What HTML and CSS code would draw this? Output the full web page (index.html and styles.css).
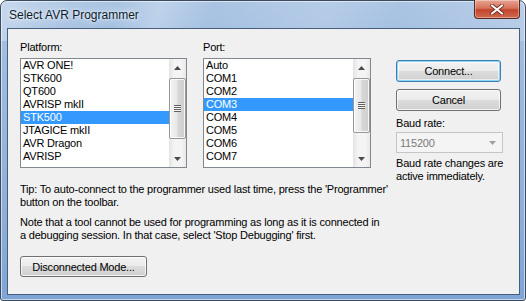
FILE: index.html
```html
<!DOCTYPE html>
<html lang="en">
<head>
  <meta charset="UTF-8">
  <title>Select AVR Programmer</title>
  <link rel="stylesheet" href="styles.css">
</head>
<body>

<!-- Dialog window -->
<div class="window">
  <div class="titlebar">
    <span class="title">Select AVR Programmer</span>
    <div class="close">
      <svg width="14" height="11" viewBox="0 0 14 11">
        <path d="M2 1.5 L12 9.5 M12 1.5 L2 9.5" stroke="#6a2418" stroke-width="3.6" stroke-linecap="round"/>
        <path d="M2 1.5 L12 9.5 M12 1.5 L2 9.5" stroke="#fff" stroke-width="2.2" stroke-linecap="round"/>
      </svg>
    </div>
  </div>

  <div class="client">
    <div class="top">
      <!-- Platform list -->
      <div class="col col-platform">
        <div class="label">Platform:</div>
        <div class="listbox">
          <ul class="items">
            <li>AVR ONE!</li>
            <li>STK600</li>
            <li>QT600</li>
            <li>AVRISP mkII</li>
            <li class="selected">STK500</li>
            <li>JTAGICE mkII</li>
            <li>AVR Dragon</li>
            <li>AVRISP</li>
          </ul>
          <div class="vscroll">
            <div class="arrow"><svg width="7" height="4" viewBox="0 0 7 4"><path d="M0 4 L3.5 0 L7 4 Z" fill="#4a4a4a"/></svg></div>
            <div class="track">
              <div class="thumb" style="height: 61px;"><span class="grip"></span></div>
            </div>
            <div class="arrow"><svg width="7" height="4" viewBox="0 0 7 4"><path d="M0 0 L3.5 4 L7 0 Z" fill="#4a4a4a"/></svg></div>
          </div>
        </div>
      </div>

      <!-- Port list -->
      <div class="col col-port">
        <div class="label">Port:</div>
        <div class="listbox">
          <ul class="items">
            <li>Auto</li>
            <li>COM1</li>
            <li>COM2</li>
            <li class="selected">COM3</li>
            <li>COM4</li>
            <li>COM5</li>
            <li>COM6</li>
            <li>COM7</li>
          </ul>
          <div class="vscroll">
            <div class="arrow"><svg width="7" height="4" viewBox="0 0 7 4"><path d="M0 4 L3.5 0 L7 4 Z" fill="#4a4a4a"/></svg></div>
            <div class="track">
              <div class="thumb" style="height: 55px;"><span class="grip"></span></div>
            </div>
            <div class="arrow"><svg width="7" height="4" viewBox="0 0 7 4"><path d="M0 0 L3.5 4 L7 0 Z" fill="#4a4a4a"/></svg></div>
          </div>
        </div>
      </div>

      <!-- Buttons and baud rate -->
      <div class="col col-side">
        <button class="btn btn-default">Connect...</button>
        <button class="btn btn-cancel">Cancel</button>
        <div class="label label-baud">Baud rate:</div>
        <div class="combo">
          <span>115200</span>
          <svg width="7" height="4" viewBox="0 0 7 4"><path d="M0 0 L3.5 4 L7 0 Z" fill="#a0a0a0"/></svg>
        </div>
        <p class="baud-note">Baud rate changes are<br>active immediately.</p>
      </div>
    </div>

    <p class="tip">Tip: To auto-connect to the programmer used last time, press the 'Programmer'<br>button on the toolbar.</p>
    <p class="note">Note that a tool cannot be used for programming as long as it is connected in<br>a debugging session. In that case, select 'Stop Debugging' first.</p>

    <button class="btn btn-disc">Disconnected Mode...</button>
  </div>
</div>

</body>
</html>
```

FILE: styles.css
```css
* {
  box-sizing: border-box;
}
body {
  margin: 0;
  background: #fff;
  font-family: 'Liberation Sans', Arial, sans-serif;
  font-size: 11px;
  letter-spacing: -0.2px;
  color: #000;
}
.window {
  width: 526px;
  height: 301px;
  border: 1px solid #3b4a5c;
  border-radius: 7px 7px 3px 3px;
  padding: 0 5px 5px 6px;
  display: flex;
  flex-direction: column;
  background:
    linear-gradient(105deg, rgba(255,255,255,0.35) 0%, rgba(255,255,255,0.05) 14%, rgba(255,255,255,0) 22%, rgba(255,255,255,0.25) 30%, rgba(255,255,255,0) 40%, rgba(255,255,255,0.15) 62%, rgba(255,255,255,0) 75%, rgba(255,255,255,0.2) 100%) top / 100% 40px no-repeat,
    linear-gradient(to bottom, #aac4e3 0%, #9ab9df 30%, #8eafd8 70%, #7fa5d6 100%);
  box-shadow: inset 0 0 0 1px rgba(255,255,255,0.55);
}
.titlebar {
  height: 27px;
  display: flex;
  justify-content: space-between;
  align-items: flex-start;
}
.title {
  margin: 7px 0 0 2px;
  font-size: 12px;
  letter-spacing: 0;
  color: #0b1b2c;
  text-shadow: 0 0 8px rgba(255,255,255,0.9), 0 0 3px rgba(255,255,255,0.9);
}
.close {
  width: 46px;
  height: 19px;
  margin-top: -1px;
  border: 1px solid #5a2a22;
  border-top: none;
  border-radius: 0 0 4px 4px;
  background: linear-gradient(to bottom, #e8a493 0%, #d7725c 45%, #c2452c 55%, #d06a4f 100%);
  box-shadow: inset 0 0 0 1px rgba(255,255,255,0.35);
  display: flex;
  justify-content: center;
  align-items: center;
}
.client {
  flex: 1;
  background: #f0f0f0;
  border: 1px solid #475f7d;
  padding: 12px 12px 0 12px;
}
.top {
  display: flex;
  align-items: flex-start;
  height: 127px;
}
.col-platform {
  width: 167px;
}
.col-port {
  width: 168px;
  margin-left: 16px;
}
.col-side {
  width: 108px;
  margin-left: 25px;
  display: flex;
  flex-direction: column;
  align-items: flex-start;
}
.label {
  line-height: 13px;
  height: 13px;
  margin-bottom: 4px;
}
.listbox {
  height: 110px;
  border: 1px solid #828790;
  background: #fff;
  display: flex;
}
.items {
  list-style: none;
  margin: 0;
  padding: 0;
  flex: 1;
  overflow: hidden;
}
.items li {
  height: 13px;
  line-height: 13px;
  padding-left: 2px;
  white-space: nowrap;
}
.items li.selected {
  background: #3399ff;
  color: #fff;
}
.vscroll {
  width: 17px;
  display: flex;
  flex-direction: column;
  background: linear-gradient(to right, #e3e3e3, #f4f4f4 30%, #f4f4f4 70%, #e9e9e9);
}
.arrow {
  height: 17px;
  display: flex;
  justify-content: center;
  align-items: center;
}
.track {
  flex: 1;
  padding-top: 2px;
}
.thumb {
  width: 17px;
  border: 1px solid #979797;
  border-radius: 2px;
  background: linear-gradient(to right, #f3f3f3 0%, #e8e8e8 45%, #d6d6d6 55%, #cfcfcf 100%);
  box-shadow: inset 0 0 0 1px rgba(255,255,255,0.8);
  display: flex;
  justify-content: center;
  align-items: center;
}
.grip {
  width: 7px;
  height: 7px;
  background: repeating-linear-gradient(to bottom, #5f5f5f 0 1px, #f6f6f6 1px 2px);
}
.btn {
  font-family: 'Liberation Sans', Arial, sans-serif;
  font-size: 11px;
  letter-spacing: -0.2px;
  color: #000;
  border: 1px solid #707070;
  border-radius: 3px;
  background: linear-gradient(to bottom, #f2f2f2 0%, #ebebeb 49%, #dddddd 50%, #cfcfcf 100%);
  box-shadow: inset 0 0 0 1px rgba(255,255,255,0.75);
  padding: 0;
}
.btn-default {
  width: 105px;
  height: 22px;
  margin-top: 19px;
  border-color: #3c7fb1;
  box-shadow: inset 0 0 0 1px #8ed3f5, inset 0 0 0 2px rgba(255,255,255,0.6);
}
.btn-cancel {
  width: 105px;
  height: 22px;
  margin-top: 7px;
}
.label-baud {
  margin: 6px 0 2px 0;
}
.combo {
  width: 107px;
  height: 21px;
  border: 1px solid #c5c5c5;
  background: #f4f4f4;
  color: #7a7a7a;
  display: flex;
  justify-content: space-between;
  align-items: center;
  padding: 0 6px 0 3px;
}
.baud-note {
  margin: 4px 0 0 0;
  line-height: 13px;
  white-space: nowrap;
}
.tip {
  margin: 15px 0 0 0;
  line-height: 13px;
  white-space: nowrap;
}
.note {
  margin: 7px 0 0 0;
  line-height: 12.5px;
  white-space: nowrap;
}
.btn-disc {
  width: 127px;
  height: 21px;
  margin-top: 15px;
}
```
